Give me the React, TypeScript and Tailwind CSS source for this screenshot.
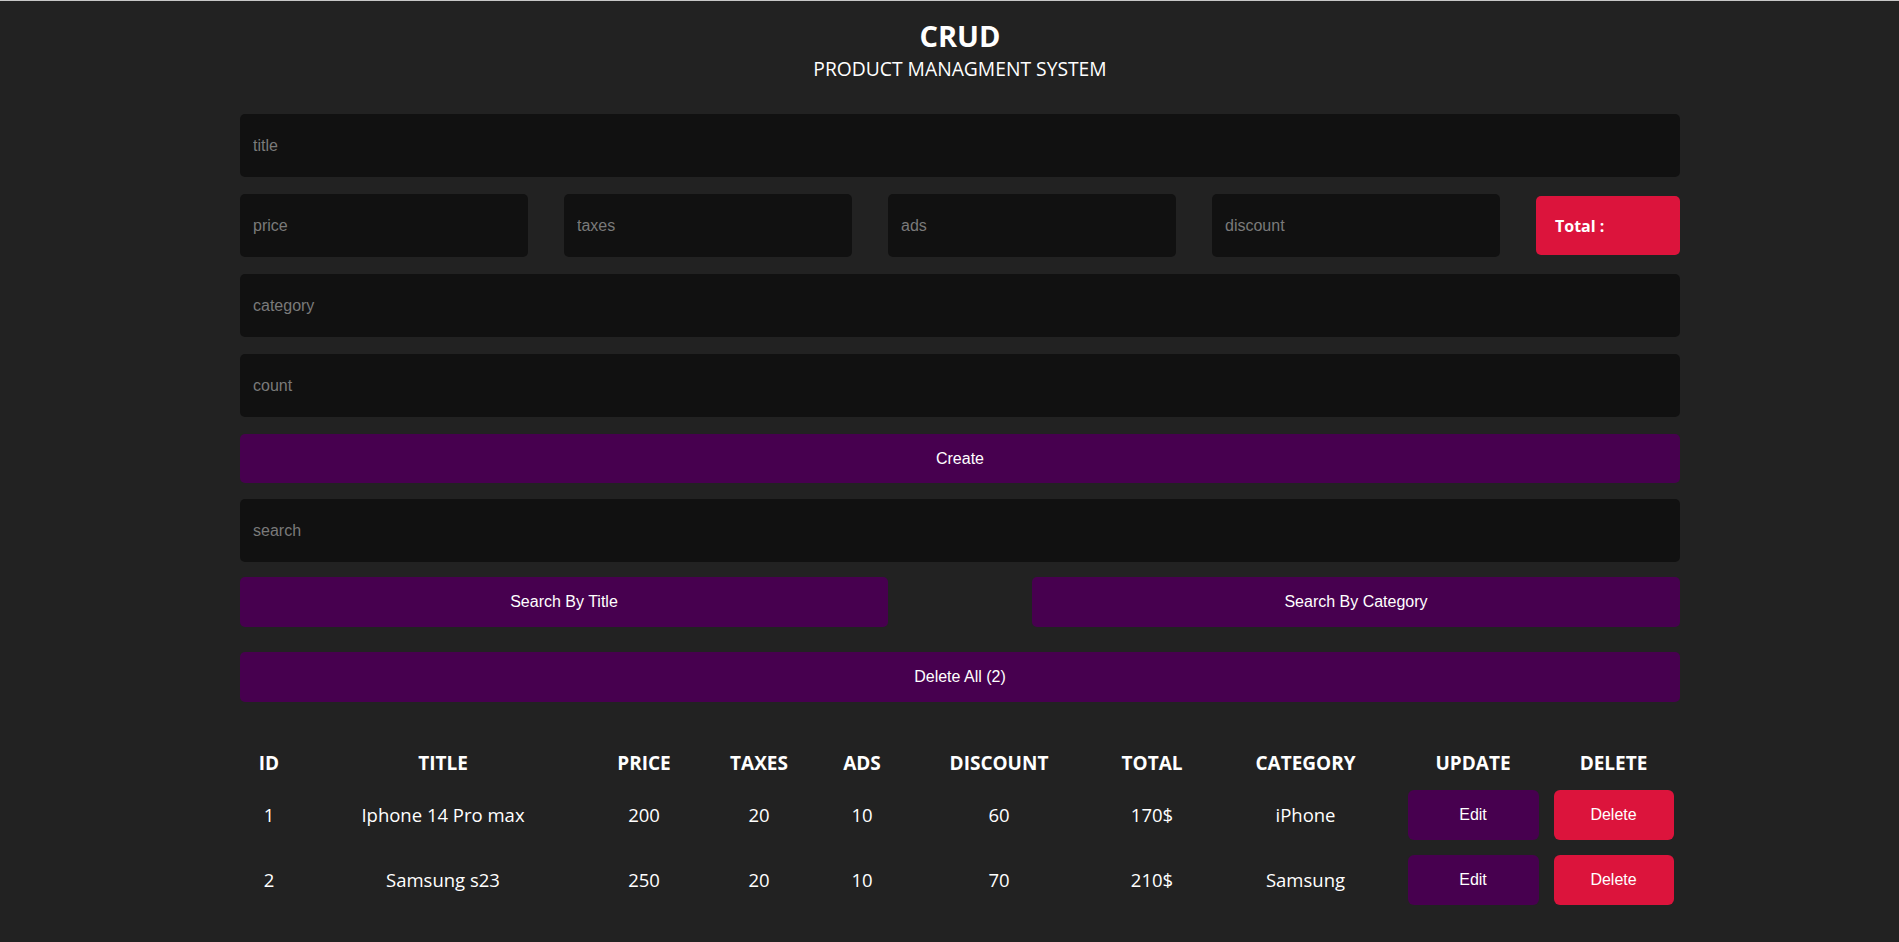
const products = [
  { id: 1, title: "Iphone 14 Pro max", price: 200, taxes: 20, ads: 10, discount: 60, total: "170$", category: "iPhone" },
  { id: 2, title: "Samsung s23", price: 250, taxes: 20, ads: 10, discount: 70, total: "210$", category: "Samsung" },
];

const headings = ["ID", "TITLE", "PRICE", "TAXES", "ADS", "DISCOUNT", "TOTAL", "CATEGORY", "UPDATE", "DELETE"];

const fieldCls =
  "h-[63px] rounded-[5px] bg-[#111111] px-[13px] text-[16px] text-white outline-none placeholder:text-[#7a7a7a] font-['Liberation_Sans',Arial,sans-serif]";

const purpleBtn =
  "rounded-[5px] bg-[#47004f] text-[16px] text-white font-['Liberation_Sans',Arial,sans-serif]";

const cols =
  "grid grid-cols-[58px_290px_112px_118px_88px_186px_120px_187px_148px_133px] items-center text-center";

export default function App() {
  return (
    <div className="min-h-screen border-t border-[#c8c8c8] bg-[#222222] text-white font-['Open_Sans','Noto_Sans',sans-serif]">
      <div className="ml-[240px] w-[1440px] flex flex-col">
        {/* Header */}
        <div className="flex flex-col items-center pt-[17px]">
          <h2 className="text-[29px] leading-[36px] font-bold">CRUD</h2>
          <p className="mt-[3px] text-[19.3px] leading-[24px]">PRODUCT MANAGMENT SYSTEM</p>
        </div>

        <input className={`${fieldCls} w-full mt-[33px]`} placeholder="title" />

        <div className="mt-[17px] flex items-center gap-[36px]">
          <input className={`${fieldCls} w-[288px] shrink-0`} placeholder="price" />
          <input className={`${fieldCls} w-[288px] shrink-0`} placeholder="taxes" />
          <input className={`${fieldCls} w-[288px] shrink-0`} placeholder="ads" />
          <input className={`${fieldCls} w-[288px] shrink-0`} placeholder="discount" />
          <div className="flex h-[59px] w-[144px] shrink-0 items-center rounded-[5px] bg-[#dc143c] pl-[19px] text-[16px] font-bold">
            Total :
          </div>
        </div>

        <input className={`${fieldCls} w-full mt-[17px]`} placeholder="category" />
        <input className={`${fieldCls} w-full mt-[17px]`} placeholder="count" />

        <button className={`${purpleBtn} w-full mt-[17px] h-[49px]`}>Create</button>

        <input className={`${fieldCls} w-full mt-[16px]`} placeholder="search" />

        <div className="mt-[15px] flex justify-between">
          <button className={`${purpleBtn} h-[50px] w-[648px]`}>Search By Title</button>
          <button className={`${purpleBtn} h-[50px] w-[648px]`}>Search By Category</button>
        </div>

        <button className={`${purpleBtn} w-full mt-[25px] h-[50px]`}>Delete All (2)</button>

        {/* Table */}
        <div className="mt-[43px]">
          <div className={`${cols} h-[37px] text-[19px] font-bold`}>
            {headings.map((h) => (
              <div key={h}>{h}</div>
            ))}
          </div>
          {products.map((p) => (
            <div key={p.id} className={`${cols} h-[65px] text-[18.5px]`}>
              <div>{p.id}</div>
              <div>{p.title}</div>
              <div>{p.price}</div>
              <div>{p.taxes}</div>
              <div>{p.ads}</div>
              <div>{p.discount}</div>
              <div>{p.total}</div>
              <div>{p.category}</div>
              <div className="flex justify-center">
                <button className="h-[50px] w-[131px] rounded-[6px] bg-[#47004f] text-[16px] font-['Liberation_Sans',Arial,sans-serif]">
                  Edit
                </button>
              </div>
              <div className="flex justify-center">
                <button className="h-[50px] w-[120px] rounded-[6px] bg-[#dc143c] text-[16px] font-['Liberation_Sans',Arial,sans-serif]">
                  Delete
                </button>
              </div>
            </div>
          ))}
        </div>
      </div>
    </div>
  );
}
